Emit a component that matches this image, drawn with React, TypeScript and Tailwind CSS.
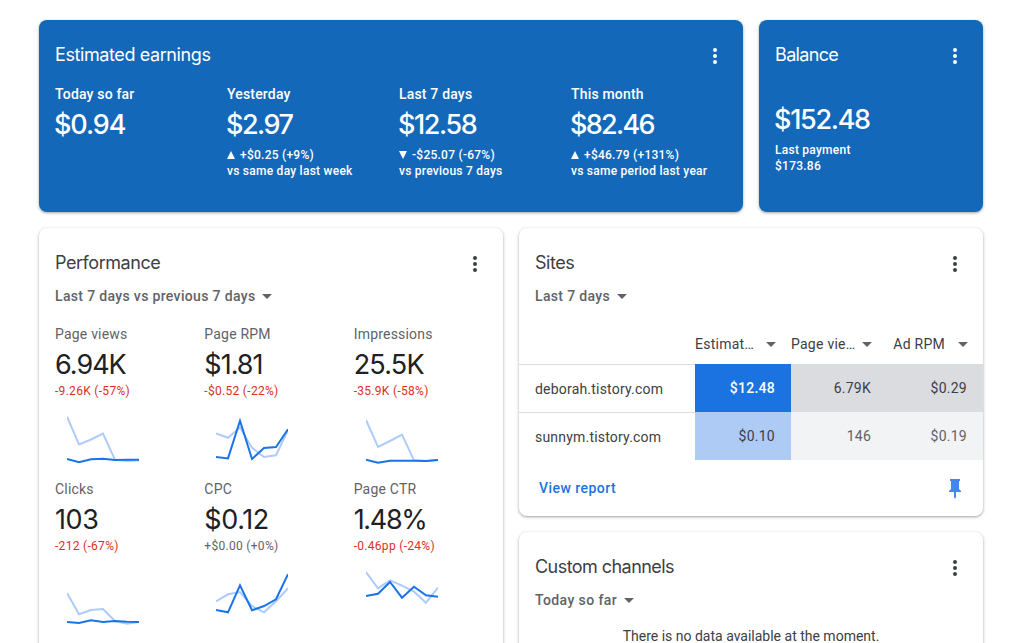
import { clsx } from 'clsx';

type Earning = {
  label: string;
  value: string;
  trend?: 'up' | 'down';
  change?: string;
  compare?: string;
  tracking: string;
};

type Metric = {
  label: string;
  value: string;
  change: string;
  negative: boolean;
  previous: number[];
  current: number[];
  tracking: string;
};

const earnings: Earning[] = [
  { label: 'Today so far', value: '$0.94', tracking: 'tracking-[-1.1px]' },
  { label: 'Yesterday', value: '$2.97', trend: 'up', change: '+$0.25 (+9%)', compare: 'vs same day last week', tracking: 'tracking-[-1.5px]' },
  { label: 'Last 7 days', value: '$12.58', trend: 'down', change: '-$25.07 (-67%)', compare: 'vs previous 7 days', tracking: 'tracking-[-1.4px]' },
  { label: 'This month', value: '$82.46', trend: 'up', change: '+$46.79 (+131%)', compare: 'vs same period last year', tracking: 'tracking-[-1.7px]' },
];

const metrics: Metric[] = [
  {
    label: 'Page views', value: '6.94K', change: '-9.26K (-57%)', negative: true, tracking: 'tracking-[-1px]',
    previous: [6.7, 34.5, 29.5, 23.5, 49.8, 51, 50.3],
    current: [49, 52.3, 49.3, 48.7, 50, 49.7, 49.7],
  },
  {
    label: 'Page RPM', value: '$1.81', change: '-$0.52 (-22%)', negative: true, tracking: 'tracking-[-1px]',
    previous: [23.5, 27.8, 17.5, 37.7, 47, 45.3, 20.3],
    current: [47, 48.4, 10.7, 49, 38, 37, 19.3],
  },
  {
    label: 'Impressions', value: '25.5K', change: '-35.9K (-58%)', negative: true, tracking: 'tracking-[-0.8px]',
    previous: [10, 37, 31, 24.7, 50.3, 51, 50],
    current: [49.7, 52.7, 50.7, 50.7, 50.7, 51, 50],
  },
  {
    label: 'Clicks', value: '103', change: '-212 (-67%)', negative: true, tracking: 'tracking-[-0.4px]',
    previous: [28, 49.3, 45, 44, 56, 58.7, 57],
    current: [57, 58, 55.3, 57, 56, 56.7, 57],
  },
  {
    label: 'CPC', value: '$0.12', change: '+$0.00 (+0%)', negative: false, tracking: 'tracking-[-0.4px]',
    previous: [36.3, 29.3, 27, 41, 47.3, 36.3, 23.3],
    current: [45, 47.3, 20.3, 45.3, 41, 34.3, 9.3],
  },
  {
    label: 'Page CTR', value: '1.48%', change: '-0.46pp (-24%)', negative: true, tracking: 'tracking-[-1.3px]',
    previous: [7, 23.3, 15.3, 20.7, 26.7, 37.7, 22.7],
    current: [31, 28.7, 17, 32.7, 21.7, 30.3, 31.7],
  },
];

const toPoints = (values: number[]) => values.map((y, i) => `${i * 12},${y}`).join(' ');

function Sparkline({ previous, current }: { previous: number[]; current: number[] }) {
  return (
    <svg width="72" height="60" viewBox="0 0 72 60" fill="none" strokeWidth="2" className="ml-3 block">
      <polyline points={toPoints(previous)} stroke="#aecbfa" />
      <polyline points={toPoints(current)} stroke="#1a73e8" />
    </svg>
  );
}

function MoreButton() {
  return (
    <button className="flex size-6 items-center justify-center" aria-label="More options">
      <svg width="24" height="24" viewBox="0 0 24 24" fill="currentColor">
        <circle cx="12" cy="6" r="2" />
        <circle cx="12" cy="12" r="2" />
        <circle cx="12" cy="18" r="2" />
      </svg>
    </button>
  );
}

function Caret({ className }: { className?: string }) {
  return (
    <svg width="10" height="5" viewBox="0 0 10 5" fill="#5f6368" className={clsx('shrink-0', className)}>
      <path d="M0 0h10L5 5z" />
    </svg>
  );
}

function CardHeader({ title, tracking }: { title: string; tracking: string }) {
  return (
    <div className="flex h-6 items-center justify-between pr-4">
      <h2 className={clsx("font-['Inter',sans-serif] text-[18px] leading-6", tracking)}>{title}</h2>
      <div className="mt-[2px]"><MoreButton /></div>
    </div>
  );
}

function RangeSelect({ label, tracking }: { label: string; tracking: string }) {
  return (
    <button className="mt-[11px] flex h-5 items-center gap-[7px] text-[#5f6368]">
      <span className={clsx('text-sm leading-5 font-medium', tracking)}>{label}</span>
      <Caret className="mt-px" />
    </button>
  );
}

const blueCard = 'h-[192px] rounded-lg bg-[#1468b9] pt-[23px] pl-4 text-white shadow-[0_1px_2px_rgba(60,64,67,.3),0_1px_3px_1px_rgba(60,64,67,.15)]';
const whiteCard = 'rounded-lg bg-white pt-[23px] pl-4 text-[#3c4043] shadow-[0_1px_2px_rgba(60,64,67,.3),0_1px_3px_1px_rgba(60,64,67,.15)]';

export default function App() {
  return (
    <div className="h-screen overflow-hidden bg-white pt-5 pl-[39px] font-['Roboto',sans-serif]">
      <div className="flex gap-4">
        <section className={clsx(blueCard, 'w-[704px]')}>
          <CardHeader title="Estimated earnings" tracking="tracking-[-0.4px]" />
          <div className="mt-[17px] grid grid-cols-4">
            {earnings.map((item) => (
              <div key={item.label}>
                <div className="text-sm leading-5 font-medium tracking-[0.18px]">{item.label}</div>
                <div className={clsx("mt-[3px] -ml-px font-['Inter',sans-serif] text-[27px] leading-9 font-medium", item.tracking)}>{item.value}</div>
                {item.change && (
                  <div className="mt-1 text-xs leading-4 font-medium tracking-[0.25px]">
                    <div className="flex items-center gap-[5px]">
                      <svg width="8" height="8" viewBox="0 0 8 8" fill="currentColor">
                        <path d={item.trend === 'up' ? 'M4 0l4 8H0z' : 'M0 0h8L4 8z'} />
                      </svg>
                      {item.change}
                    </div>
                    <div>{item.compare}</div>
                  </div>
                )}
              </div>
            ))}
          </div>
        </section>

        <section className={clsx(blueCard, 'w-[224px]')}>
          <CardHeader title="Balance" tracking="tracking-[-0.65px]" />
          <div className="mt-[35px] -ml-px font-['Inter',sans-serif] text-[27px] leading-9 font-medium tracking-[-1.3px]">$152.48</div>
          <div className="mt-1 text-xs leading-4 font-medium tracking-[0.25px]">
            <div>Last payment</div>
            <div>$173.86</div>
          </div>
        </section>
      </div>

      <div className="mt-4 flex items-start gap-4">
        <section className={clsx(whiteCard, 'h-[480px] w-[464px]')}>
          <CardHeader title="Performance" tracking="tracking-[-0.45px]" />
          <RangeSelect label="Last 7 days vs previous 7 days" tracking="tracking-[0.34px]" />
          <div className="mt-[18px] grid grid-cols-3">
            {metrics.map((m) => (
              <div key={m.label} className="h-[155px]">
                <div className="text-sm leading-5 tracking-[0.2px] text-[#5f6368]">{m.label}</div>
                <div className={clsx("mt-[3px] font-['Inter',sans-serif] text-[27px] leading-9 text-[#202124]", m.tracking)}>{m.value}</div>
                <div className={clsx('text-xs leading-4 tracking-[0.3px]', m.negative ? 'text-[#d93025]' : 'text-[#5f6368]')}>{m.change}</div>
                <div className="mt-[11px]"><Sparkline previous={m.previous} current={m.current} /></div>
              </div>
            ))}
          </div>
        </section>

        <div className="flex w-[464px] flex-col gap-4">
          <section className={clsx(whiteCard, 'h-[288px]')}>
            <CardHeader title="Sites" tracking="tracking-[-0.45px]" />
            <RangeSelect label="Last 7 days" tracking="tracking-[0.34px]" />
            <div className="mt-[18px] -ml-4 grid grid-cols-[176px_96px_96px_96px] text-sm tracking-[0.25px]">
              <div className="col-start-2 flex h-10 items-center justify-between pr-[15px]">Estimat…<Caret /></div>
              <div className="flex h-10 items-center justify-between pr-[15px]">Page vie…<Caret /></div>
              <div className="flex h-10 items-center justify-end gap-[13px] pr-[15px]">Ad RPM<Caret /></div>

              <div className="flex h-12 items-center border-t border-[#dadce0] pl-4 tracking-[0.2px]">deborah.tistory.com</div>
              <div className="flex h-12 items-center justify-end bg-[#1a73e0] pr-4 font-medium text-white">$12.48</div>
              <div className="flex h-12 items-center justify-end bg-[#dadce0] pr-4">6.79K</div>
              <div className="flex h-12 items-center justify-end bg-[#dadce0] pr-4">$0.29</div>

              <div className="flex h-12 items-center border-t border-[#dadce0] pl-4 tracking-[0.2px]">sunnym.tistory.com</div>
              <div className="flex h-12 items-center justify-end bg-[#aecbf6] pr-4">$0.10</div>
              <div className="flex h-12 items-center justify-end bg-[#f1f3f4] pr-4 text-[#5f6368]">146</div>
              <div className="flex h-12 items-center justify-end bg-[#f1f3f4] pr-4 text-[#5f6368]">$0.19</div>
            </div>
            <div className="flex h-14 items-center justify-between pr-[22px] pl-1">
              <a href="#" className="text-sm font-medium tracking-[0.45px] text-[#1a73e0]">View report</a>
              <svg width="12" height="20" viewBox="0 0 12 20" fill="#4285f4" className="mt-px">
                <path d="M1 0h10v2h-1v8l2 2v1H7v5l-1 2-1-2v-5H0v-1l2-2V2H1z" />
              </svg>
            </div>
          </section>

          <section className={clsx(whiteCard, 'h-[200px]')}>
            <CardHeader title="Custom channels" tracking="tracking-[-0.55px]" />
            <RangeSelect label="Today so far" tracking="tracking-[0.4px]" />
            <p className="mt-4 pr-4 text-center text-sm leading-5">There is no data available at the moment.</p>
          </section>
        </div>
      </div>
    </div>
  );
}
